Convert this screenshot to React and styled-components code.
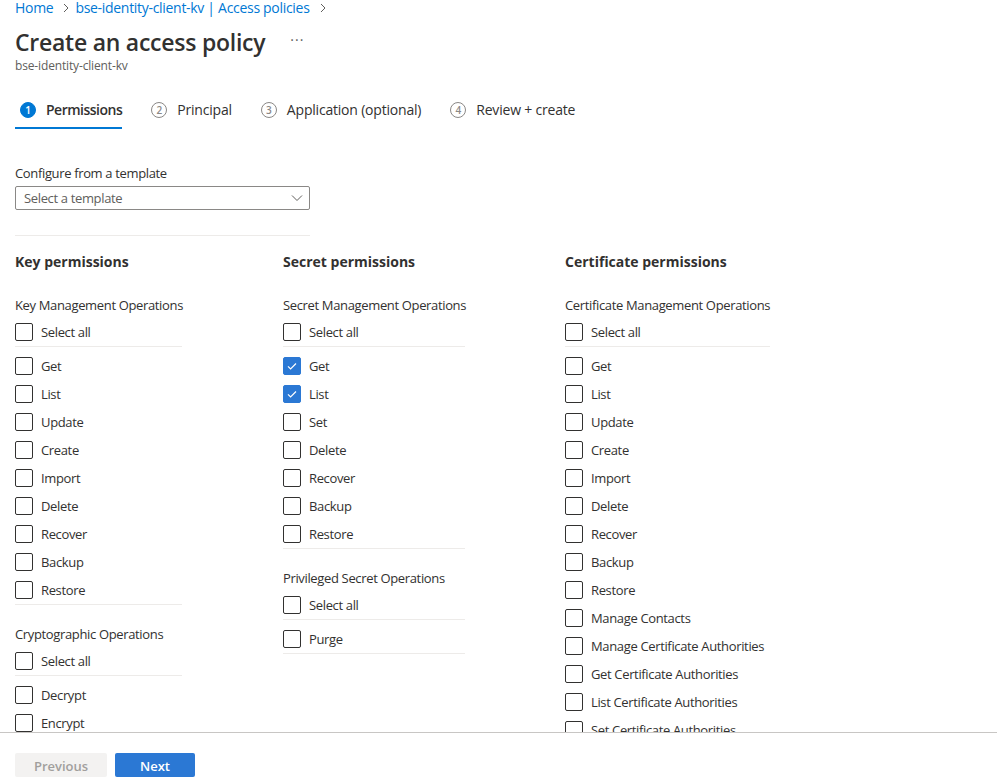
import React from 'react';
import styled, { createGlobalStyle } from 'styled-components';

const GlobalStyle = createGlobalStyle`
  html, body {
    margin: 0;
    padding: 0;
    background: #fff;
  }
  body {
    font-family: 'Segoe UI', 'Open Sans', 'Noto Sans', sans-serif;
    color: #323130;
  }
`;

const Page = styled.div`
  height: 784px;
  display: flex;
  flex-direction: column;
  overflow: hidden;
`;

const Main = styled.div`
  flex: 1;
  overflow: hidden;
  padding-left: 15px;
`;

const Breadcrumb = styled.nav`
  display: flex;
  align-items: center;
  height: 16px;
  font-size: 14px;
  line-height: 16px;
  letter-spacing: -0.3px;
  color: #0078d4;
`;

const Crumb = styled.span`
  color: #0078d4;
  white-space: nowrap;
`;

const Sep = styled.span`
  display: inline-flex;
  margin: 0 5px 0 9px;
  svg {
    width: 8px;
    height: 10px;
  }
`;

const TitleRow = styled.div`
  display: flex;
  align-items: center;
  margin-top: 10px;
  height: 32px;
`;

const Title = styled.h1`
  margin: 0;
  font-size: 23px;
  font-weight: 600;
  line-height: 32px;
  color: #323130;
  letter-spacing: -0.25px;
`;

const More = styled.span`
  margin-left: 25px;
  font-size: 14px;
  color: #605e5c;
  letter-spacing: 1px;
  position: relative;
  top: -3px;
`;

const Subtitle = styled.div`
  font-size: 12px;
  line-height: 16px;
  letter-spacing: -0.15px;
  color: #605e5c;
`;

const Tabs = styled.div`
  display: flex;
  gap: 24px;
  margin-top: 19px;
`;

const Tab = styled.div`
  display: flex;
  align-items: center;
  gap: 10px;
  padding: 7px 0 7px 5px;
  line-height: 20px;
  font-size: 14px;
  letter-spacing: ${(p) => (p.$active ? '-0.5px' : '-0.2px')};
  color: #323130;
  font-weight: ${(p) => (p.$active ? 600 : 400)};
  border-bottom: 2px solid ${(p) => (p.$active ? '#0078d4' : 'transparent')};
`;

const StepDot = styled.span`
  width: 16px;
  height: 16px;
  box-sizing: border-box;
  border-radius: 50%;
  display: flex;
  align-items: center;
  justify-content: center;
  font-size: 10px;
  font-weight: 600;
  letter-spacing: 0;
  line-height: 1;
  background: ${(p) => (p.$active ? '#0078d4' : '#fff')};
  color: ${(p) => (p.$active ? '#fff' : '#8a8886')};
  border: 1px solid ${(p) => (p.$active ? '#0078d4' : '#8a8886')};
`;

const FieldLabel = styled.div`
  margin-top: 35px;
  font-size: 13px;
  line-height: 18px;
  letter-spacing: -0.35px;
  color: #323130;
`;

const Dropdown = styled.div`
  margin-top: 4px;
  width: 295px;
  height: 24px;
  box-sizing: border-box;
  border: 1px solid #8a8886;
  border-radius: 2px;
  display: flex;
  align-items: center;
  justify-content: space-between;
  padding: 0 6px 0 8px;
  font-size: 13px;
  letter-spacing: -0.35px;
  color: #605e5c;
  svg {
    width: 12px;
    height: 12px;
  }
`;

const Divider = styled.hr`
  margin: 25px 0 0;
  width: 295px;
  border: none;
  border-top: 1px solid #edebe9;
`;

const Columns = styled.div`
  display: grid;
  grid-template-columns: 268px 282px auto;
  margin-top: 16px;
`;

const Column = styled.section`
  display: flex;
  flex-direction: column;
`;

const ColumnTitle = styled.h2`
  margin: 0 0 24px;
  font-size: 14px;
  font-weight: 700;
  line-height: 20px;
  color: #323130;
`;

const Group = styled.div`
  width: ${(p) => p.$width}px;
  margin-bottom: 20px;
`;

const GroupLabel = styled.div`
  font-size: 13px;
  line-height: 18px;
  letter-spacing: -0.35px;
  white-space: nowrap;
  color: #323130;
  margin-bottom: 4px;
`;

const SelectAll = styled.div`
  border-bottom: 1px solid #edebe9;
  margin-bottom: 5px;
`;

const Items = styled.div`
  border-bottom: 1px solid #edebe9;
`;

const Row = styled.label`
  display: flex;
  align-items: center;
  gap: 8px;
  height: 28px;
  font-size: 13px;
  letter-spacing: -0.35px;
  color: #323130;
  white-space: nowrap;
`;

const Box = styled.span`
  width: 18px;
  height: 18px;
  box-sizing: border-box;
  border-radius: 2px;
  border: 1px solid ${(p) => (p.$checked ? '#2b78d4' : '#323130')};
  background: ${(p) => (p.$checked ? '#2b78d4' : '#fff')};
  display: flex;
  align-items: center;
  justify-content: center;
  flex-shrink: 0;
  svg {
    width: 12px;
    height: 12px;
  }
`;

const Footer = styled.footer`
  height: 52px;
  flex-shrink: 0;
  border-top: 1px solid #c8c6c4;
  display: flex;
  align-items: flex-start;
  gap: 8px;
  padding: 20px 15px 0;
  box-sizing: border-box;
`;

const Button = styled.button`
  height: 24px;
  border: none;
  border-radius: 2px;
  font-family: inherit;
  font-size: 13px;
  font-weight: 600;
  line-height: 24px;
  padding: 1px 0 0;
  width: ${(p) => p.$width}px;
  background: ${(p) => (p.$primary ? '#2b78d4' : '#f3f2f1')};
  color: ${(p) => (p.$primary ? '#fff' : '#a19f9d')};
`;

const Chevron = () => (
  <svg viewBox="0 0 8 10" fill="none" stroke="#605e5c" strokeWidth="1">
    <path d="M2 1l4 4-4 4" />
  </svg>
);

const Check = ({ checked }) => (
  <Box $checked={checked}>
    {checked && (
      <svg viewBox="0 0 12 12" fill="none" stroke="#fff" strokeWidth="1.2">
        <path d="M2 6.3l2.6 2.6L10 3.5" />
      </svg>
    )}
  </Box>
);

const PermGroup = ({ label, width, items, checked = [] }) => (
  <Group $width={width}>
    <GroupLabel>{label}</GroupLabel>
    <SelectAll>
      <Row>
        <Check />
        Select all
      </Row>
    </SelectAll>
    <Items>
      {items.map((item) => (
        <Row key={item}>
          <Check checked={checked.includes(item)} />
          {item}
        </Row>
      ))}
    </Items>
  </Group>
);

const keyOps = ['Get', 'List', 'Update', 'Create', 'Import', 'Delete', 'Recover', 'Backup', 'Restore'];
const cryptoOps = ['Decrypt', 'Encrypt', 'Unwrap Key', 'Wrap Key', 'Verify', 'Sign'];
const secretOps = ['Get', 'List', 'Set', 'Delete', 'Recover', 'Backup', 'Restore'];
const certOps = [
  'Get',
  'List',
  'Update',
  'Create',
  'Import',
  'Delete',
  'Recover',
  'Backup',
  'Restore',
  'Manage Contacts',
  'Manage Certificate Authorities',
  'Get Certificate Authorities',
  'List Certificate Authorities',
  'Set Certificate Authorities',
  'Delete Certificate Authorities',
];

const steps = ['Permissions', 'Principal', 'Application (optional)', 'Review + create'];

export default function App() {
  return (
    <>
      <GlobalStyle />
      <Page>
        <Main>
          <Breadcrumb>
            <Crumb>Home</Crumb>
            <Sep>
              <Chevron />
            </Sep>
            <Crumb>bse-identity-client-kv | Access policies</Crumb>
            <Sep>
              <Chevron />
            </Sep>
          </Breadcrumb>
          <TitleRow>
            <Title>Create an access policy</Title>
            <More>···</More>
          </TitleRow>
          <Subtitle>bse-identity-client-kv</Subtitle>

          <Tabs>
            {steps.map((s, i) => (
              <Tab key={s} $active={i === 0}>
                <StepDot $active={i === 0}>{i + 1}</StepDot>
                {s}
              </Tab>
            ))}
          </Tabs>

          <FieldLabel>Configure from a template</FieldLabel>
          <Dropdown>
            Select a template
            <svg viewBox="0 0 12 12" fill="none" stroke="#605e5c" strokeWidth="1">
              <path d="M1 3.5l5 5 5-5" />
            </svg>
          </Dropdown>
          <Divider />

          <Columns>
            <Column>
              <ColumnTitle>Key permissions</ColumnTitle>
              <PermGroup label="Key Management Operations" width={167} items={keyOps} />
              <PermGroup label="Cryptographic Operations" width={167} items={cryptoOps} />
            </Column>
            <Column>
              <ColumnTitle>Secret permissions</ColumnTitle>
              <PermGroup
                label="Secret Management Operations"
                width={182}
                items={secretOps}
                checked={['Get', 'List']}
              />
              <PermGroup label="Privileged Secret Operations" width={182} items={['Purge']} />
            </Column>
            <Column>
              <ColumnTitle>Certificate permissions</ColumnTitle>
              <PermGroup label="Certificate Management Operations" width={205} items={certOps} />
            </Column>
          </Columns>
        </Main>
        <Footer>
          <Button $width={92} disabled>
            Previous
          </Button>
          <Button $width={80} $primary>
            Next
          </Button>
        </Footer>
      </Page>
    </>
  );
}
